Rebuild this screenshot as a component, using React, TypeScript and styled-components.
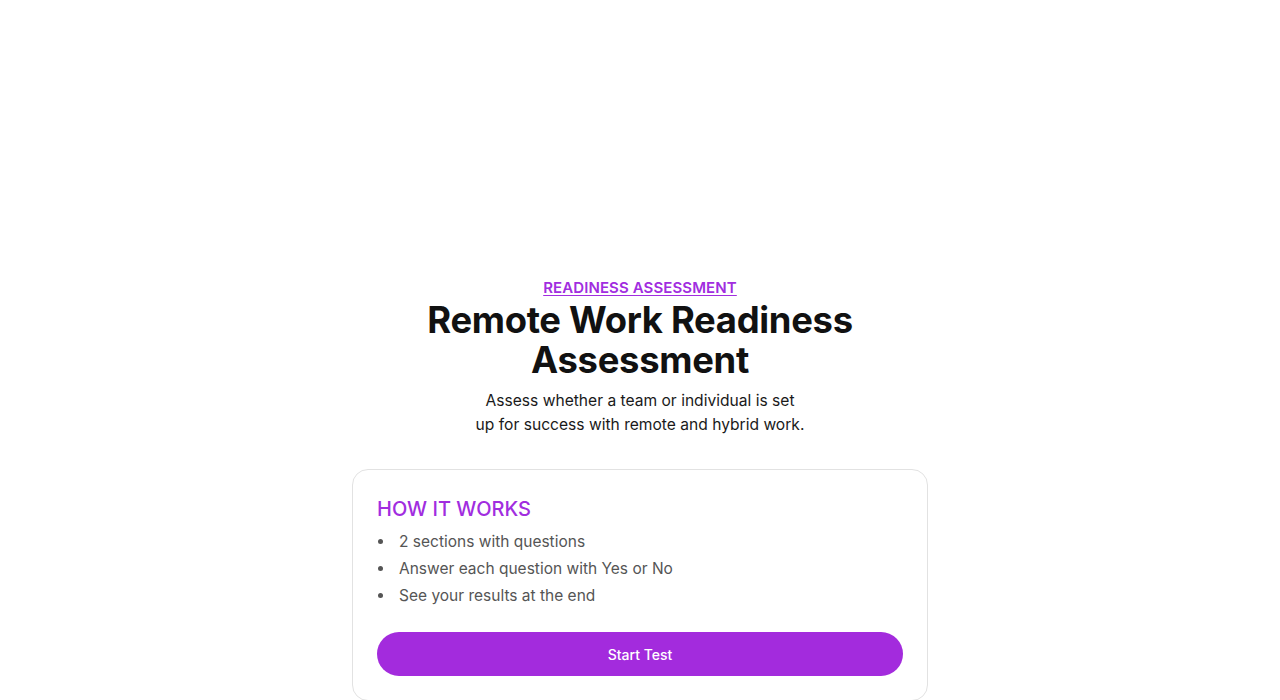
import styled, { createGlobalStyle } from 'styled-components';

const GlobalStyle = createGlobalStyle`
  html, body {
    margin: 0;
    padding: 0;
    background: #ffffff;
  }

  body {
    font-family: Inter, "Noto Sans", "Liberation Sans", sans-serif;
    color: #111111;
  }
`;

const steps = [
  '2 sections with questions',
  'Answer each question with Yes or No',
  'See your results at the end',
];

const App = () => {
  return (
    <>
      <GlobalStyle />
      <Page>
        <Header>
          <Eyebrow href="#">READINESS ASSESSMENT</Eyebrow>
          <Title>Remote Work Readiness Assessment</Title>
          <Lead>Assess whether a team or individual is set up for success with remote and hybrid work.</Lead>
        </Header>
        <Card>
          <CardTitle>HOW IT WORKS</CardTitle>
          <Steps>
            {steps.map((step) => (
              <Step key={step}>{step}</Step>
            ))}
          </Steps>
          <StartButton type="button">Start Test</StartButton>
        </Card>
      </Page>
    </>
  );
};

export default App;

const Page = styled.main`
  display: flex;
  flex-direction: column;
  align-items: center;

  padding: 278px 0 40px;
`;

const Header = styled.header`
  display: flex;
  flex-direction: column;
  align-items: center;

  width: 460px;
  text-align: center;
`;

const Eyebrow = styled.a`
  font-size: 15px;
  font-weight: 600;
  line-height: 20px;
  letter-spacing: 0.1px;

  color: #a12ddf;
  text-decoration: underline;
  text-underline-offset: 2px;
`;

const Title = styled.h1`
  margin: 2px 0 0;

  font-size: 36.4px;
  font-weight: 700;
  line-height: 40px;
  letter-spacing: -0.3px;

  color: #111111;
`;

const Lead = styled.p`
  max-width: 330px;
  margin: 9px 0 0;

  font-size: 15.6px;
  line-height: 24px;

  color: #1a1a1a;
`;

const Card = styled.section`
  box-sizing: border-box;
  width: 576px;
  margin-top: 32px;
  padding: 26px 24px 24px;

  border: 1px solid #e2e2e2;
  border-radius: 16px;
  background: #ffffff;
`;

const CardTitle = styled.h2`
  margin: 0;

  font-size: 20px;
  font-weight: 500;
  line-height: 26px;

  color: #a12ddf;
`;

const Steps = styled.ul`
  margin: 6px 0 0;
  padding: 0;

  list-style: none;
  color: #555555;
`;

const Step = styled.li`
  display: flex;
  align-items: center;
  gap: 16px;

  font-size: 15.5px;
  line-height: 27px;

  &::before {
    content: '';
    flex: none;
    width: 5px;
    height: 5px;
    margin-left: 1px;

    border-radius: 50%;
    background: #555555;
  }
`;

const StartButton = styled.button`
  display: block;
  width: 100%;
  height: 44px;
  margin-top: 23px;

  border: none;
  border-radius: 999px;
  background: #a32bdd;

  font-family: inherit;
  font-size: 14px;
  font-weight: 500;
  color: #ffffff;

  cursor: pointer;
`;
